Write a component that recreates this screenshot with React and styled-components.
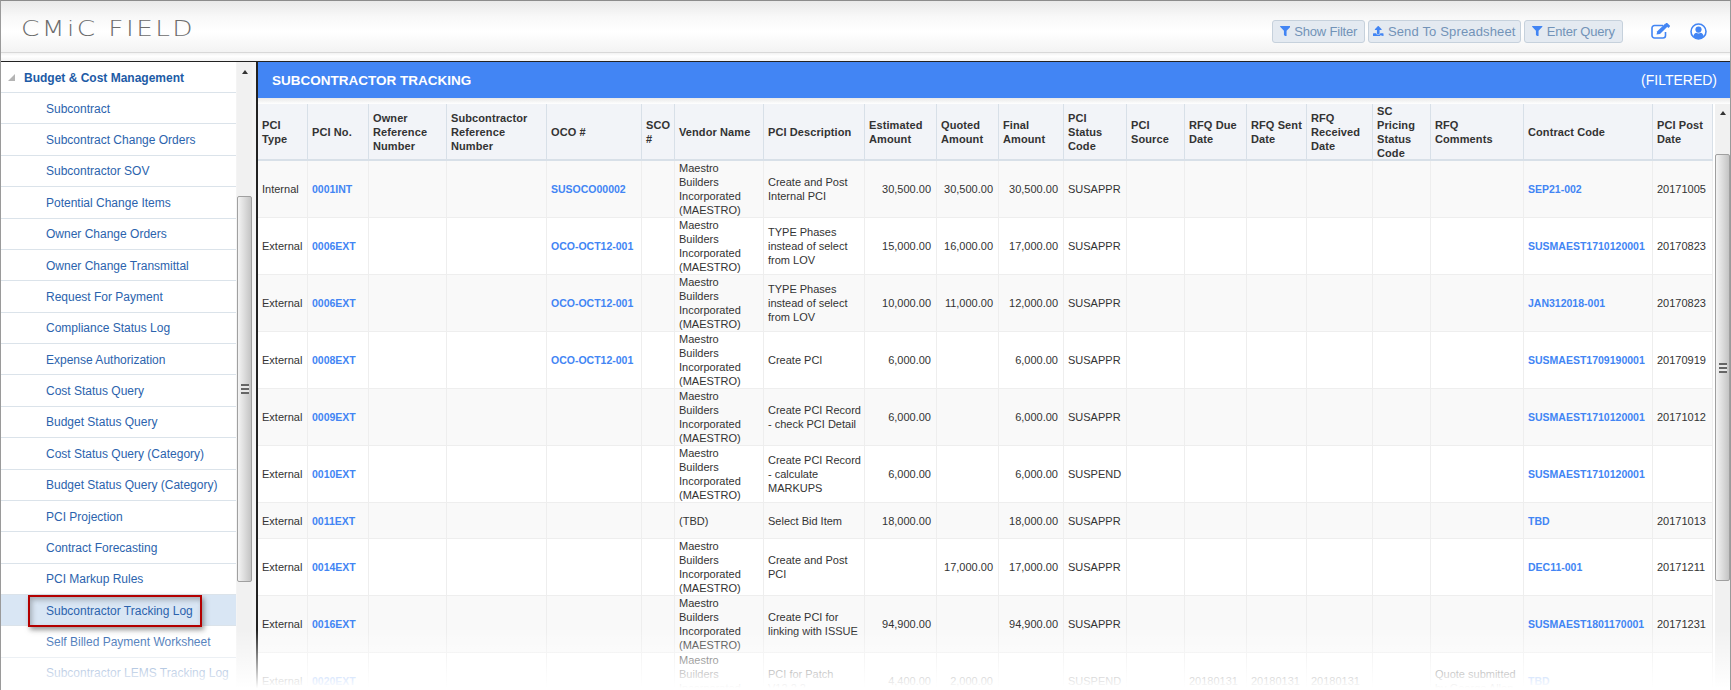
import React from 'react'
import styled, { createGlobalStyle } from 'styled-components'
import { FaFilter, FaUpload } from 'react-icons/fa'

const GlobalStyle = createGlobalStyle`
  html, body {
    margin: 0;
    padding: 0;
    background: #fff;
  }
  * {
    box-sizing: border-box;
  }
`

const BLUE = '#4285f4'

const Page = styled.div`
  position: relative;
  display: flex;
  flex-direction: column;
  width: 1731px;
  height: 690px;
  overflow: hidden;
  border-top: 1px solid #8c8c8c;
  border-left: 1px solid #9a9a9a;
  border-right: 1px solid #9a9a9a;
  font-family: 'Liberation Sans', Arial, sans-serif;
`

const Header = styled.header`
  display: flex;
  flex: 0 0 52px;
  align-items: center;
  padding: 9px 23px 0 20px;
  background: linear-gradient(#e9e9e9 0, #f8f8f8 30%, #fff 60%, #f3f3f3 100%);
  border-bottom: 1px solid #d8d8d8;
`

const Logo = styled.div`
  flex: 1;
  padding-bottom: 6px;
  color: #6c6c6c;
  font-family: 'DejaVu Sans', sans-serif;
  font-size: 22px;
  font-weight: 200;
  letter-spacing: 2px;
  transform: scaleX(1.2);
  transform-origin: left center;
`

const Actions = styled.div`
  display: flex;
  align-items: center;
  gap: 3px;
`

const ActionButton = styled.button`
  display: flex;
  align-items: center;
  justify-content: center;
  gap: 4px;
  width: ${props => props.$width}px;
  height: 23px;
  padding: 0;
  color: #7293b8;
  background: #e4eaf1;
  border: 1px solid #c6d1dc;
  border-radius: 3px;
  font-family: 'Liberation Sans', sans-serif;
  font-size: 13px;
  letter-spacing: ${props => props.$tracking}px;
  svg {
    color: ${BLUE};
    font-size: 10.5px;
  }
`

const IconLink = styled.span`
  display: flex;
  margin-left: ${props => props.$gap}px;
  color: ${BLUE};
`

const Strip = styled.div`
  flex: 0 0 9px;
  background: linear-gradient(#f2f2f2, #fff 40%, #f4f4f4);
  border-bottom: 1px solid #222;
`

const Body = styled.div`
  display: flex;
  flex: 1;
  min-height: 0;
`

const Sidebar = styled.aside`
  display: flex;
  flex: 0 0 257px;
  background: #f4f4f4;
  border-right: 2px solid #222;
`

const Nav = styled.nav`
  position: relative;
  flex: 0 0 235px;
  background: #fff;
`

const NavHeading = styled.div`
  display: flex;
  align-items: center;
  height: 31px;
  padding: 1px 0 0 7px;
  color: #1d5ba6;
  font-size: 12px;
  font-weight: bold;
  border-bottom: 1px solid #dbe3ea;
`

const Triangle = styled.span`
  width: 0;
  height: 0;
  margin-right: 9px;
  border-style: solid;
  border-width: 0 0 7px 7px;
  border-color: transparent transparent #b4b4b4 transparent;
`

const NavItem = styled.div`
  display: flex;
  align-items: center;
  height: 31.375px;
  padding: 1px 0 0 45px;
  color: #2b63ad;
  font-size: 12px;
  white-space: nowrap;
  background: ${props => (props.$active ? '#d9e6f4' : 'transparent')};
  border-bottom: 1px solid #dbe3ea;
`

const Callout = styled.div`
  position: absolute;
  left: 27px;
  top: 533px;
  width: 174px;
  height: 32px;
  border: 2px solid #b30000;
  box-shadow: 2px 3px 5px rgba(70, 70, 70, 0.55), inset 2px 3px 5px rgba(70, 70, 70, 0.35);
`

const ScrollTrack = styled.div`
  display: flex;
  flex-direction: column;
  align-items: center;
  flex: 0 0 ${props => props.$width}px;
  margin-left: ${props => props.$left}px;
  background: #f1f1f1;
`

const ScrollArrow = styled.span`
  width: 0;
  height: 0;
  margin-top: ${props => props.$top}px;
  border-style: solid;
  border-width: 0 3.5px 4px 3.5px;
  border-color: transparent transparent #333 transparent;
`

const ScrollThumb = styled.div`
  display: flex;
  align-items: center;
  justify-content: center;
  width: 15px;
  height: ${props => props.$height}px;
  margin-top: ${props => props.$top}px;
  background: linear-gradient(90deg, #f4f4f4, #dcdcdc 50%, #c4c4c4);
  border: 1px solid #a0a0a0;
  border-radius: 2px;
`

const Grip = styled.span`
  width: 8px;
  height: 10px;
  background: repeating-linear-gradient(#666 0, #666 2px, #e8e8e8 2px, #e8e8e8 4px);
`

const Main = styled.main`
  display: flex;
  flex: 1;
  flex-direction: column;
  min-width: 0;
`

const TitleBar = styled.div`
  display: flex;
  flex: 0 0 36px;
  align-items: center;
  justify-content: space-between;
  padding: 0 13px 0 14px;
  color: #fff;
  background: ${BLUE};
  font-size: 14px;
`

const Title = styled.span`
  font-size: 13.5px;
  font-weight: bold;
`

const TablePane = styled.div`
  display: flex;
  flex: 1;
  min-height: 0;
  padding-top: 6px;
  background: linear-gradient(#e8e8e8, #fff 6px);
`

const TableWrap = styled.div`
  flex: 0 0 1455px;
`

const Grid = styled.table`
  width: 1455px;
  table-layout: fixed;
  border-collapse: separate;
  border-spacing: 0;
  font-size: 11px;
  line-height: 14px;
  color: #333;
`

const Th = styled.th`
  height: 57px;
  padding: 0 0 0 4px;
  color: #333;
  background: #f2f4f8;
  font-weight: bold;
  text-align: left;
  white-space: pre-line;
  letter-spacing: 0.1px;
  border-right: 1px solid #d8e0e8;
  border-bottom: 1px solid #d8e0e8;
  box-shadow: inset 0 -1px 0 #d8e0e8;
`

const Tr = styled.tr`
  background: ${props => (props.$odd ? '#f9f9f9' : '#fff')};
`

const Td = styled.td`
  height: ${props => props.$height}px;
  padding: ${props => (props.$right ? '0 5px 0 2px' : '0 2px 0 4px')};
  text-align: ${props => (props.$right ? 'right' : 'left')};
  border-right: 1px solid #eeeeee;
  border-bottom: 1px solid #eeeeee;
`

const Code = styled.a`
  color: ${BLUE};
  font-size: 10.5px;
  font-weight: bold;
  white-space: nowrap;
`

const Fade = styled.div`
  position: absolute;
  left: -1px;
  right: -1px;
  bottom: 0;
  height: 60px;
  background: linear-gradient(rgba(255, 255, 255, 0), #fff 97%);
  pointer-events: none;
`

function EditIcon() {
  return (
    <svg width="20" height="16" viewBox="0 0 20 16" fill="none">
      <path d="M12 2.5H3.5A2.5 2.5 0 0 0 1 5v7.5A2.5 2.5 0 0 0 3.5 15h8.5a2.5 2.5 0 0 0 2.5-2.5V9" stroke="currentColor" strokeWidth="1.6" />
      <path d="M5.5 11.5l.8-3.2L14 .8l2.6 2.6L9 11z" fill="currentColor" />
      <path d="M15 0l1-.2 3 3-.3 1-1.3 1.2-3.5-3.6z" fill="currentColor" />
    </svg>
  )
}

function UserIcon() {
  return (
    <svg width="17" height="17" viewBox="0 0 17 17" fill="none">
      <circle cx="8.5" cy="8.5" r="7.5" stroke="currentColor" strokeWidth="1.6" />
      <circle cx="8.5" cy="6.6" r="3.1" fill="currentColor" />
      <path d="M3.2 13.6c.4-2.6 2-3.6 3.2-3.8.6.4 1.3.6 2.1.6s1.500-.2 2.100-.6c1.200.2 2.800 1.200 3.200 3.800a7.300 7.300 0 0 1-10.600 0z" fill="currentColor" />
    </svg>
  )
}

const navItems = [
  'Subcontract',
  'Subcontract Change Orders',
  'Subcontractor SOV',
  'Potential Change Items',
  'Owner Change Orders',
  'Owner Change Transmittal',
  'Request For Payment',
  'Compliance Status Log',
  'Expense Authorization',
  'Cost Status Query',
  'Budget Status Query',
  'Cost Status Query (Category)',
  'Budget Status Query (Category)',
  'PCI Projection',
  'Contract Forecasting',
  'PCI Markup Rules',
  'Subcontractor Tracking Log',
  'Self Billed Payment Worksheet',
  'Subcontractor LEMS Tracking Log',
]

// header cells break where the original grid breaks them
const columns = [
  ['PCI\nType', 50],
  ['PCI No.', 61],
  ['Owner\nReference\nNumber', 78],
  ['Subcontractor\nReference\nNumber', 100],
  ['OCO #', 95],
  ['SCO\n#', 33],
  ['Vendor Name', 89],
  ['PCI Description', 101],
  ['Estimated\nAmount', 72],
  ['Quoted\nAmount', 62],
  ['Final\nAmount', 65],
  ['PCI\nStatus\nCode', 63],
  ['PCI\nSource', 58],
  ['RFQ Due\nDate', 62],
  ['RFQ Sent\nDate', 60],
  ['RFQ\nReceived\nDate', 66],
  ['SC\nPricing\nStatus\nCode', 58],
  ['RFQ\nComments', 93],
  ['Contract Code', 129],
  ['PCI Post\nDate', 60],
]

const MAESTRO = 'Maestro Builders Incorporated (MAESTRO)'
const LOV = 'TYPE Phases instead of select from LOV'

const rows = [
  { type: 'Internal', no: '0001INT', oco: 'SUSOCO00002', vendor: MAESTRO, desc: 'Create and Post Internal PCI', est: '30,500.00', quoted: '30,500.00', final: '30,500.00', status: 'SUSAPPR', code: 'SEP21-002', post: '20171005' },
  { type: 'External', no: '0006EXT', oco: 'OCO-OCT12-001', vendor: MAESTRO, desc: LOV, est: '15,000.00', quoted: '16,000.00', final: '17,000.00', status: 'SUSAPPR', code: 'SUSMAEST1710120001', post: '20170823' },
  { type: 'External', no: '0006EXT', oco: 'OCO-OCT12-001', vendor: MAESTRO, desc: LOV, est: '10,000.00', quoted: '11,000.00', final: '12,000.00', status: 'SUSAPPR', code: 'JAN312018-001', post: '20170823' },
  { type: 'External', no: '0008EXT', oco: 'OCO-OCT12-001', vendor: MAESTRO, desc: 'Create PCI', est: '6,000.00', final: '6,000.00', status: 'SUSAPPR', code: 'SUSMAEST1709190001', post: '20170919' },
  { type: 'External', no: '0009EXT', vendor: MAESTRO, desc: 'Create PCI Record - check PCI Detail', est: '6,000.00', final: '6,000.00', status: 'SUSAPPR', code: 'SUSMAEST1710120001', post: '20171012' },
  { type: 'External', no: '0010EXT', vendor: MAESTRO, desc: 'Create PCI Record - calculate MARKUPS', est: '6,000.00', final: '6,000.00', status: 'SUSPEND', code: 'SUSMAEST1710120001' },
  { type: 'External', no: '0011EXT', vendor: '(TBD)', desc: 'Select Bid Item', est: '18,000.00', final: '18,000.00', status: 'SUSAPPR', code: 'TBD', post: '20171013', height: 36 },
  { type: 'External', no: '0014EXT', vendor: MAESTRO, desc: 'Create and Post PCI', quoted: '17,000.00', final: '17,000.00', status: 'SUSAPPR', code: 'DEC11-001', post: '20171211' },
  { type: 'External', no: '0016EXT', vendor: MAESTRO, desc: 'Create PCI for linking with ISSUE', est: '94,900.00', final: '94,900.00', status: 'SUSAPPR', code: 'SUSMAEST1801170001', post: '20171231' },
  { type: 'External', no: '0020EXT', vendor: MAESTRO, desc: 'PCI for Patch V12.2.2', est: '4,400.00', quoted: '2,000.00', status: 'SUSPEND', due: '20180131', sent: '20180131', received: '20180131', comments: 'Quote submitted by George Allen', code: 'TBD' },
]

function Row({ row, odd }) {
  const h = row.height || 57
  return (
    <Tr $odd={odd}>
      <Td $height={h}>{row.type}</Td>
      <Td><Code>{row.no}</Code></Td>
      <Td />
      <Td />
      <Td><Code>{row.oco}</Code></Td>
      <Td />
      <Td>{row.vendor}</Td>
      <Td>{row.desc}</Td>
      <Td $right>{row.est}</Td>
      <Td $right>{row.quoted}</Td>
      <Td $right>{row.final}</Td>
      <Td>{row.status}</Td>
      <Td />
      <Td>{row.due}</Td>
      <Td>{row.sent}</Td>
      <Td>{row.received}</Td>
      <Td />
      <Td>{row.comments}</Td>
      <Td><Code>{row.code}</Code></Td>
      <Td>{row.post}</Td>
    </Tr>
  )
}

export default function App() {
  return (
    <Page>
      <GlobalStyle />
      <Header>
        <Logo>CMiC FIELD</Logo>
        <Actions>
          <ActionButton $width={93} $tracking={-0.2}><FaFilter />Show Filter</ActionButton>
          <ActionButton $width={153} $tracking={0.15}><FaUpload />Send To Spreadsheet</ActionButton>
          <ActionButton $width={99} $tracking={-0.2}><FaFilter />Enter Query</ActionButton>
        </Actions>
        <IconLink $gap={28}><EditIcon /></IconLink>
        <IconLink $gap={19}><UserIcon /></IconLink>
      </Header>
      <Strip />
      <Body>
        <Sidebar>
          <Nav>
            <NavHeading><Triangle />Budget &amp; Cost Management</NavHeading>
            {navItems.map(item => (
              <NavItem key={item} $active={item === 'Subcontractor Tracking Log'}>{item}</NavItem>
            ))}
            <Callout />
          </Nav>
          <ScrollTrack $left={1} $width={15}>
            <ScrollArrow $top={8} />
            <ScrollThumb $top={122} $height={386}><Grip /></ScrollThumb>
          </ScrollTrack>
        </Sidebar>
        <Main>
          <TitleBar>
            <Title>SUBCONTRACTOR TRACKING</Title>
            <span>(FILTERED)</span>
          </TitleBar>
          <TablePane>
            <TableWrap>
              <Grid>
                <colgroup>
                  {columns.map(([name, width]) => <col key={name} width={width} />)}
                </colgroup>
                <thead>
                  <tr>
                    {columns.map(([name]) => <Th key={name}>{name}</Th>)}
                  </tr>
                </thead>
                <tbody>
                  {rows.map((row, i) => <Row key={i} row={row} odd={i % 2 === 0} />)}
                </tbody>
              </Grid>
            </TableWrap>
            <ScrollTrack $left={2} $width={15}>
              <ScrollArrow $top={7} />
              <ScrollThumb $top={39} $height={427}><Grip /></ScrollThumb>
            </ScrollTrack>
          </TablePane>
        </Main>
      </Body>
      <Fade />
    </Page>
  )
}
